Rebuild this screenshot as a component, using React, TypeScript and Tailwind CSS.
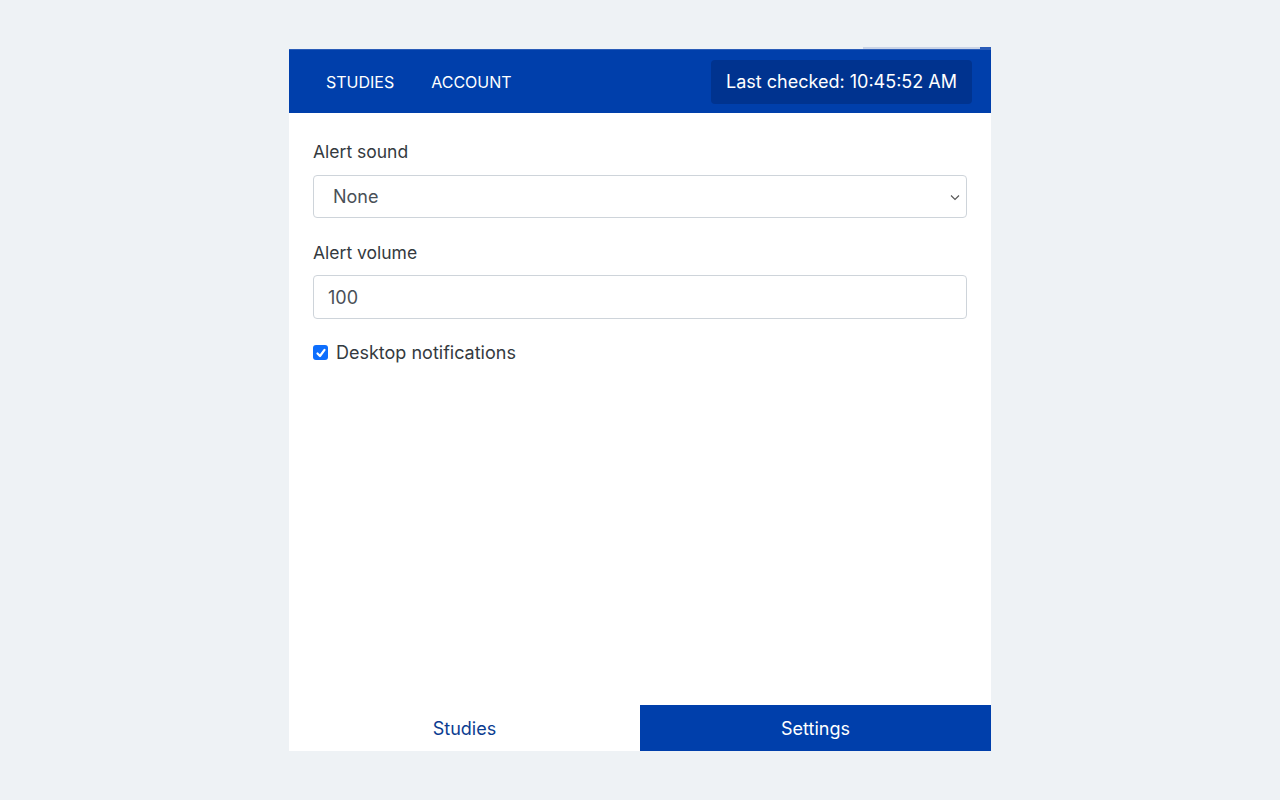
import React from "react";

export default function App() {
  return (
    <div className="min-h-[800px] w-full bg-[#eef2f5] flex justify-center" style={{ fontFamily: "Inter, 'Liberation Sans', sans-serif" }}>
      <div className="w-[702px] mt-[49px] h-[702px] bg-white flex flex-col relative">
        <div className="absolute -top-[2px] right-[11px] w-[117px] h-[2px] bg-[#c9d3e6]" />
        <div className="absolute -top-[2px] right-0 w-[11px] h-[2px] bg-[#2a5cb8]" />
        <header className="h-[64px] bg-[#003fab] border-t border-[#2a5cb8] flex items-center justify-between pl-[37px] pr-[19px]">
          <nav className="flex items-center gap-[37px] text-white text-[16px]">
            <span>STUDIES</span>
            <span>ACCOUNT</span>
          </nav>
          <div className="h-[44px] px-[15px] rounded-[4px] bg-[#00338f] text-white text-[18px] flex items-center">
            Last checked: 10:45:52 AM
          </div>
        </header>
        <main className="flex-1 px-[24px] pt-[27px] text-[#343a40]">
          <label className="block text-[17.5px] leading-[24px] mb-[11px]">Alert sound</label>
          <div className="relative h-[43px] border border-[#ced4da] rounded-[4px] flex items-center pl-[19px] text-[18px] text-[#495057]">
            None
            <svg className="absolute right-[6px] top-[18px]" width="10" height="7" viewBox="0 0 10 7" fill="none">
              <path d="M1 1.5 L5 5.5 L9 1.5" stroke="#555" strokeWidth="1.1" />
            </svg>
          </div>
          <label className="block text-[17.5px] leading-[24px] mt-[23px] mb-[10px]">Alert volume</label>
          <div className="h-[44px] border border-[#ced4da] rounded-[4px] flex items-center pl-[14px] text-[18px] text-[#495057]">
            100
          </div>
          <div className="flex items-center mt-[20px] gap-[8px]">
            <div className="w-[15px] h-[15px] rounded-[3px] bg-[#0d6efd] flex items-center justify-center">
              <svg width="12" height="12" viewBox="0 0 12 12" fill="none">
                <path d="M2.5 6.5 L5 9 L9.5 2.8" stroke="white" strokeWidth="2.2" strokeLinecap="round" strokeLinejoin="round" />
              </svg>
            </div>
            <span className="text-[18px] text-[#343a40]">Desktop notifications</span>
          </div>
        </main>
        <footer className="h-[46px] grid grid-cols-2 text-[18px]">
          <div className="flex items-center justify-center text-[#0b3d91] bg-white">Studies</div>
          <div className="flex items-center justify-center text-white bg-[#003fab]">Settings</div>
        </footer>
      </div>
    </div>
  );
}
